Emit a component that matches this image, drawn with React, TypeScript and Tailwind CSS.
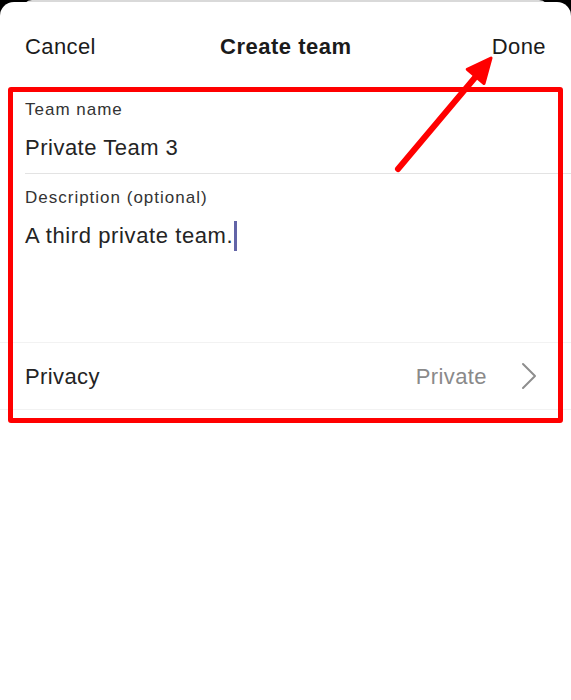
export default function App() {
  return (
    <div className="relative w-[571px] h-[700px] bg-black overflow-hidden font-['Liberation_Sans',Arial,sans-serif]">
      {/* card peeking behind the sheet */}
      <div className="absolute left-[22px] right-[22px] top-0 h-[10px] rounded-t-[10px] bg-[#d9d9d9]" />

      <div className="relative mt-[2px] h-[698px] rounded-t-[14px] bg-white">
        <header className="flex h-[88px] items-center justify-between px-[25px] text-[22px] tracking-[0.4px] text-[#1b1b1b]">
          <span>Cancel</span>
          <span className="ml-[-16px] font-bold tracking-[0.5px]">Create team</span>
          <span>Done</span>
        </header>

        <div className="pl-[25px] pt-[9px]">
          <div className="text-[17px] leading-[22px] tracking-[1px] text-[#333]">Team name</div>
          <div className="mt-[13px] text-[22px] leading-[28px] tracking-[0.5px] text-[#242424]">Private Team 3</div>
          <div className="mt-[11px] h-px bg-[#e3e3e3]" />
        </div>

        <div className="h-[168px] pl-[25px] pt-[13px]">
          <div className="text-[17px] leading-[22px] tracking-[1px] text-[#333]">Description (optional)</div>
          <div className="mt-[12px] flex items-center text-[22px] leading-[28px] tracking-[0.6px] text-[#242424]">
            <span>A third private team.</span>
            <span className="ml-[1px] h-[30px] w-[3px] bg-[#6264a7]" />
          </div>
        </div>

        <div className="h-px bg-[#f2f2f2]" />
        <div className="flex h-[66px] items-center pl-[25px] pr-[34px] text-[22px] tracking-[0.4px]">
          <span className="text-[#242424]">Privacy</span>
          <span className="ml-auto text-[#8a8a8a]">Private</span>
          <svg className="ml-[34px]" width="16" height="28" viewBox="0 0 16 28" fill="none">
            <path d="M2 2 L14 14 L2 26" stroke="#8e8e8e" strokeWidth="2" strokeLinecap="round" strokeLinejoin="round" />
          </svg>
        </div>
        <div className="h-px bg-[#f2f2f2]" />
      </div>

      {/* annotation overlay */}
      <div className="absolute left-[8px] top-[87px] h-[336px] w-[555px] rounded-[3px] border-[5px] border-[#ff0000]" />
      <svg className="absolute left-0 top-0" width="571" height="700" viewBox="0 0 571 700" fill="none">
        <line x1="398" y1="169" x2="478" y2="74" stroke="#ff0000" strokeWidth="6" strokeLinecap="round" />
        <polygon points="491,58 484,83.5 467.2,69.3" fill="#ff0000" stroke="#ff0000" strokeWidth="3" strokeLinejoin="round" />
      </svg>
    </div>
  );
}
